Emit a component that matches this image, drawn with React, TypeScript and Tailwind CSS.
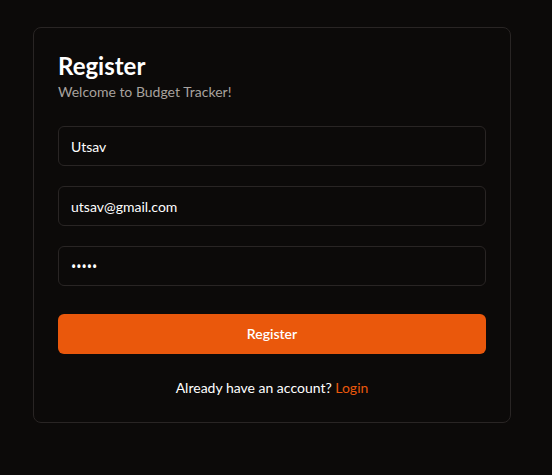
import { useState } from "react"

export default function App() {
    const [name, setName] = useState("Utsav")
    const [email, setEmail] = useState("utsav@gmail.com")
    const [password, setPassword] = useState("12345")

    return (
        <div className="w-full min-h-screen bg-[#0c0a09] pt-[27px] pl-[33px] font-['Lato',sans-serif]">
            <div className="w-[478px] rounded-lg border border-[#292524] bg-[#0c0a09] px-6 pt-[22px] pb-6">
                <h1 className="text-2xl leading-8 font-bold text-white">Register</h1>
                <p className="text-sm leading-5 text-[#a8a29e]">Welcome to Budget Tracker!</p>

                <form className="mt-6 flex flex-col gap-5" onSubmit={(e) => e.preventDefault()}>
                    <input
                        type="text"
                        value={name}
                        onChange={(e) => setName(e.target.value)}
                        className="h-10 w-full rounded-md border border-[#292524] bg-[#0c0a09] px-3 text-sm text-white outline-none"
                    />
                    <input
                        type="email"
                        value={email}
                        onChange={(e) => setEmail(e.target.value)}
                        className="h-10 w-full rounded-md border border-[#292524] bg-[#0c0a09] px-3 text-sm text-white outline-none"
                    />
                    <input
                        type="password"
                        value={password}
                        onChange={(e) => setPassword(e.target.value)}
                        className="h-10 w-full rounded-md border border-[#292524] bg-[#0c0a09] px-3 font-['Noto_Sans',sans-serif] text-sm text-white outline-none"
                    />
                    <button type="submit" className="mt-2 h-10 w-full rounded-md bg-[#ea580c] text-sm font-semibold text-white">
                        Register
                    </button>
                </form>

                <p className="mt-6 text-center text-sm leading-5 text-white">
                    Already have an account? <a href="#" className="text-[#ea580c]">Login</a>
                </p>
            </div>
        </div>
    )
}
